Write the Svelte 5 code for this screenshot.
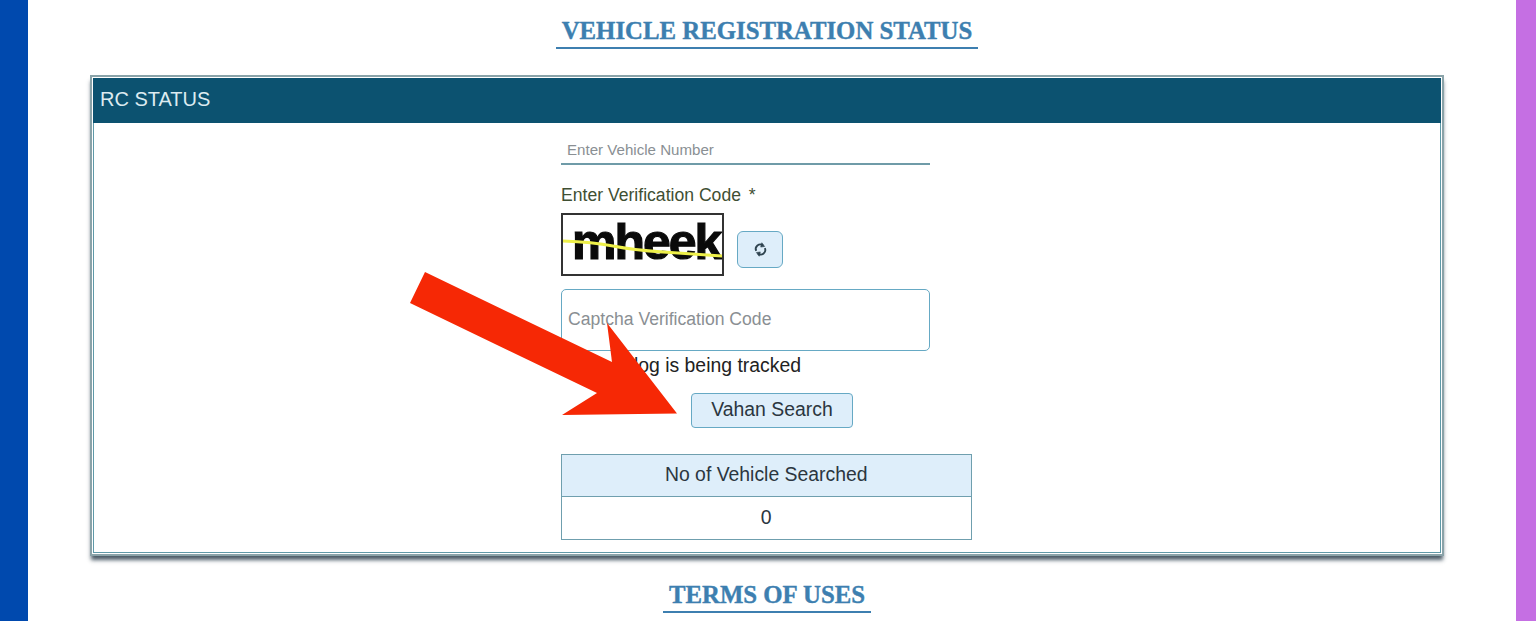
<script>
let vehicleNumber = $state("");
let captcha = $state("");
let searched = $state(0);
</script>

<div class="page">
    <div class="side left"></div>
    <main>
        <h2 class="title first"><span>VEHICLE REGISTRATION STATUS</span></h2>

        <section class="panel">
            <div class="panelInner">
                <div class="panelHead">RC STATUS</div>
                <div class="panelBody">
                    <input class="vehicleInput" placeholder="Enter Vehicle Number" bind:value={vehicleNumber} />
                    <label class="codeLabel" for="captcha">Enter Verification Code <i>*</i></label>
                    <div class="captchaRow">
                        <div class="captchaImg">
                            <span>mheek</span>
                            <svg viewBox="0 0 160 60" width="160" height="60">
                                <path d="M0 26 Q30 27 50 31 T100 37 T160 41" fill="none" stroke="#eef04a" stroke-width="3" />
                            </svg>
                        </div>
                        <button class="refresh" aria-label="Refresh">
                            <svg viewBox="0 0 16 16" width="15" height="15" fill="none" stroke="#2f4450" stroke-width="2">
                                <path d="M3.4 9.5A4.8 4.8 0 0 1 10.6 3.6" />
                                <path d="M12.6 6.5A4.8 4.8 0 0 1 5.4 12.4" />
                                <path d="M9.4 0.8 12.4 4.8 8.2 5.4Z" fill="#2f4450" stroke-width="0.6" />
                                <path d="M6.6 15.2 3.6 11.2 7.8 10.6Z" fill="#2f4450" stroke-width="0.6" />
                            </svg>
                        </button>
                    </div>
                    <input id="captcha" class="captchaInput" placeholder="Captcha Verification Code" bind:value={captcha} />
                    <p class="tracked">Your IP log is being tracked</p>
                    <button class="search">Vahan Search</button>
                    <table>
                        <thead>
                            <tr><th>No of Vehicle Searched</th></tr>
                        </thead>
                        <tbody>
                            <tr><td>{searched}</td></tr>
                        </tbody>
                    </table>
                </div>
            </div>
        </section>

        <h2 class="title second"><span>TERMS OF USES</span></h2>
    </main>
    <div class="side right"></div>

    <svg class="arrow" viewBox="0 0 300 170" width="300" height="170">
        <polygon points="25,2 212,92 207,53 277,143.5 162,145 197,123 10,33" fill="#f62805" />
    </svg>
</div>

<style>
    :global(body) {
        margin: 0;
        background: white;
    }

    .page {
        position: relative;
        display: flex;
        width: 1536px;
        height: 621px;
        overflow: hidden;
        font-family: "Liberation Sans", Arial, sans-serif;
        color: #2b3640;
    }

    .side {
        flex: none;
    }

    .left {
        width: 28px;
        background-color: #0049ae;
    }

    .right {
        width: 20px;
        background-color: #c56fe3;
    }

    main {
        flex: 1;
        padding: 0 72px 0 62px;
        min-width: 0;
    }

    .title {
        margin: 0;
        text-align: center;
        font-family: "Liberation Serif", "Times New Roman", serif;
        font-weight: bold;
        font-size: 24.8px;
        line-height: 29px;
        color: #3d7fb0;
        -webkit-text-stroke: 0.4px #3d7fb0;
    }

    .title span {
        display: inline-block;
        padding: 0 6px 2px;
        border-bottom: 2px solid #3d7fb0;
    }

    .first {
        padding-top: 16px;
    }

    .second {
        margin-top: 24px;
    }

    .panel {
        margin-top: 26px;
        height: 481px;
        box-sizing: border-box;
        border: 2px solid #8aa3a9;
        padding: 1px;
        box-shadow: 0 5px 4px -1px rgba(30, 50, 65, 0.8);
    }

    .panelInner {
        box-sizing: border-box;
        height: 100%;
        border: 1px solid #5f99a8;
        border-top: none;
    }

    .panelHead {
        height: 45px;
        margin: 0 -1px;
        line-height: 43px;
        padding-left: 7px;
        font-size: 20px;
        color: #dcebf0;
        background-color: #0c5270;
    }

    .panelBody {
        display: flex;
        flex-direction: column;
        align-items: flex-start;
        padding-left: 467px;
    }

    input {
        box-sizing: border-box;
        width: 369px;
        font-family: inherit;
        color: #333;
        background: white;
        outline: none;
    }

    input::placeholder {
        color: #8a8f93;
        opacity: 1;
    }

    .vehicleInput {
        height: 41px;
        margin-top: 1px;
        padding: 12px 6px 0;
        font-size: 15.1px;
        border: none;
        border-bottom: 2px solid #6f9ba8;
    }

    .codeLabel {
        margin-top: 20px;
        font-size: 17.6px;
        line-height: 20px;
        color: #3f4f33;
    }

    .codeLabel i {
        font-style: normal;
        margin-left: 3px;
    }

    .captchaRow {
        display: flex;
        align-items: center;
        margin-top: 8px;
    }

    .captchaImg {
        position: relative;
        box-sizing: border-box;
        width: 163px;
        height: 63px;
        border: 2px solid #333;
        overflow: hidden;
        background: white;
    }

    .captchaImg span {
        position: absolute;
        left: 9px;
        top: -2px;
        font-size: 50px;
        line-height: 58px;
        font-weight: bold;
        letter-spacing: -2px;
        color: #0a0a0a;
        -webkit-text-stroke: 1.2px #0a0a0a;
    }

    .captchaImg svg {
        position: absolute;
        left: 0;
        top: 0;
    }

    .refresh {
        display: flex;
        align-items: center;
        justify-content: center;
        box-sizing: border-box;
        width: 46px;
        height: 37px;
        margin: 10px 0 0 13px;
        padding: 0;
        border: 1.5px solid #66a9c4;
        border-radius: 6px;
        background-color: #deeefa;
    }

    .captchaInput {
        height: 62px;
        margin-top: 13px;
        padding: 0 6px 2px;
        font-size: 17.6px;
        border: 1.5px solid #66a9c4;
        border-radius: 5px;
    }

    .tracked {
        margin: 3px 0 0 5px;
        font-size: 19.4px;
        line-height: 22px;
        color: #222;
    }

    .search {
        box-sizing: border-box;
        width: 162px;
        height: 35px;
        margin: 17px 0 0 130px;
        padding: 0 0 2px;
        font-family: inherit;
        font-size: 19.4px;
        color: #2b3640;
        border: 1.5px solid #66a9c4;
        border-radius: 4px;
        background-color: #deeefa;
    }

    table {
        width: 410.5px;
        margin-top: 26px;
        border-collapse: collapse;
        font-size: 19.4px;
    }

    th, td {
        box-sizing: border-box;
        padding: 0 0 2px;
        text-align: center;
        font-weight: normal;
        border: 1.5px solid #6f9fae;
    }

    th {
        height: 42px;
        background-color: #deeefa;
    }

    td {
        height: 43px;
    }

    .arrow {
        position: absolute;
        left: 400px;
        top: 270px;
        pointer-events: none;
    }
</style>
